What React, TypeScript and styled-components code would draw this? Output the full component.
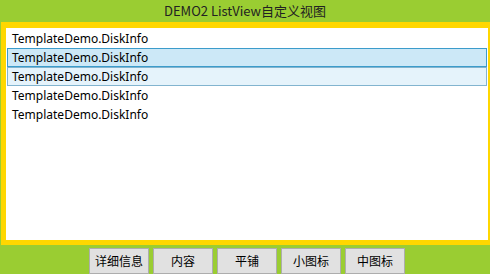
import React from 'react';
import styled, { createGlobalStyle } from 'styled-components';

const GlobalStyle = createGlobalStyle`
  html, body {
    margin: 0;
    padding: 0;
    width: 490px;
    height: 274px;
    overflow: hidden;
    background: #9acd32;
  }
`;

type RowState = 'normal' | 'selected' | 'hover';

type RowProps = {
  state: RowState
};

const items: RowState[] = ['normal', 'selected', 'hover', 'normal', 'normal'];
const buttons = ['详细信息', '内容', '平铺', '小图标', '中图标'];

const App = () => {
  return (
    <>
      <GlobalStyle />
      <Window>
        <Title>DEMO2 ListView自定义视图</Title>
        <ListBox>
          {items.map((state, i) => (
            <Row key={i} state={state}>TemplateDemo.DiskInfo</Row>
          ))}
        </ListBox>
        <ButtonBar>
          {buttons.map((label) => (
            <Button key={label}>{label}</Button>
          ))}
        </ButtonBar>
      </Window>
    </>
  );
};

export default App;

const Window = styled.div`
  width: 490px;
  height: 274px;
  display: flex;
  flex-direction: column;
  background: #9acd32;
  overflow: hidden;
  font-family: "Noto Sans", "Noto Sans CJK SC", sans-serif;
`;

const Title = styled.div`
  height: 22px;
  line-height: 21px;
  text-align: center;
  font-size: 13px;
  color: #222;
  font-family: "Noto Sans CJK SC", sans-serif;
`;

const ListBox = styled.div`
  margin-left: 1px;
  height: 213px;
  border: solid #ffd700;
  border-width: 6px 2px 5px 5px;
  background: #fff;
  padding: 1px 1px 0;
  display: flex;
  flex-direction: column;
`;

const rowBg = { normal: 'transparent', selected: '#cce8f7', hover: '#e5f3fb' };
const rowBorder = { normal: 'transparent', selected: '#3c9ccb', hover: '#82b4cf' };

const Row = styled.div<RowProps>`
  height: 17px;
  line-height: 17px;
  padding: 0 4px;
  font-size: 12px;
  color: #000;
  background: ${(props) => rowBg[props.state]};
  border: 1px solid ${(props) => rowBorder[props.state]};
`;

const ButtonBar = styled.div`
  display: flex;
  justify-content: center;
  gap: 4px;
  margin-top: 3px;
  padding-left: 4px;
`;

const Button = styled.div`
  width: 58px;
  height: 24px;
  line-height: 23px;
  text-align: center;
  background: #e1e1e1;
  border: 1px solid #adadad;
  font-size: 12px;
  color: #000;
  font-family: "Noto Sans CJK SC", sans-serif;
`;
